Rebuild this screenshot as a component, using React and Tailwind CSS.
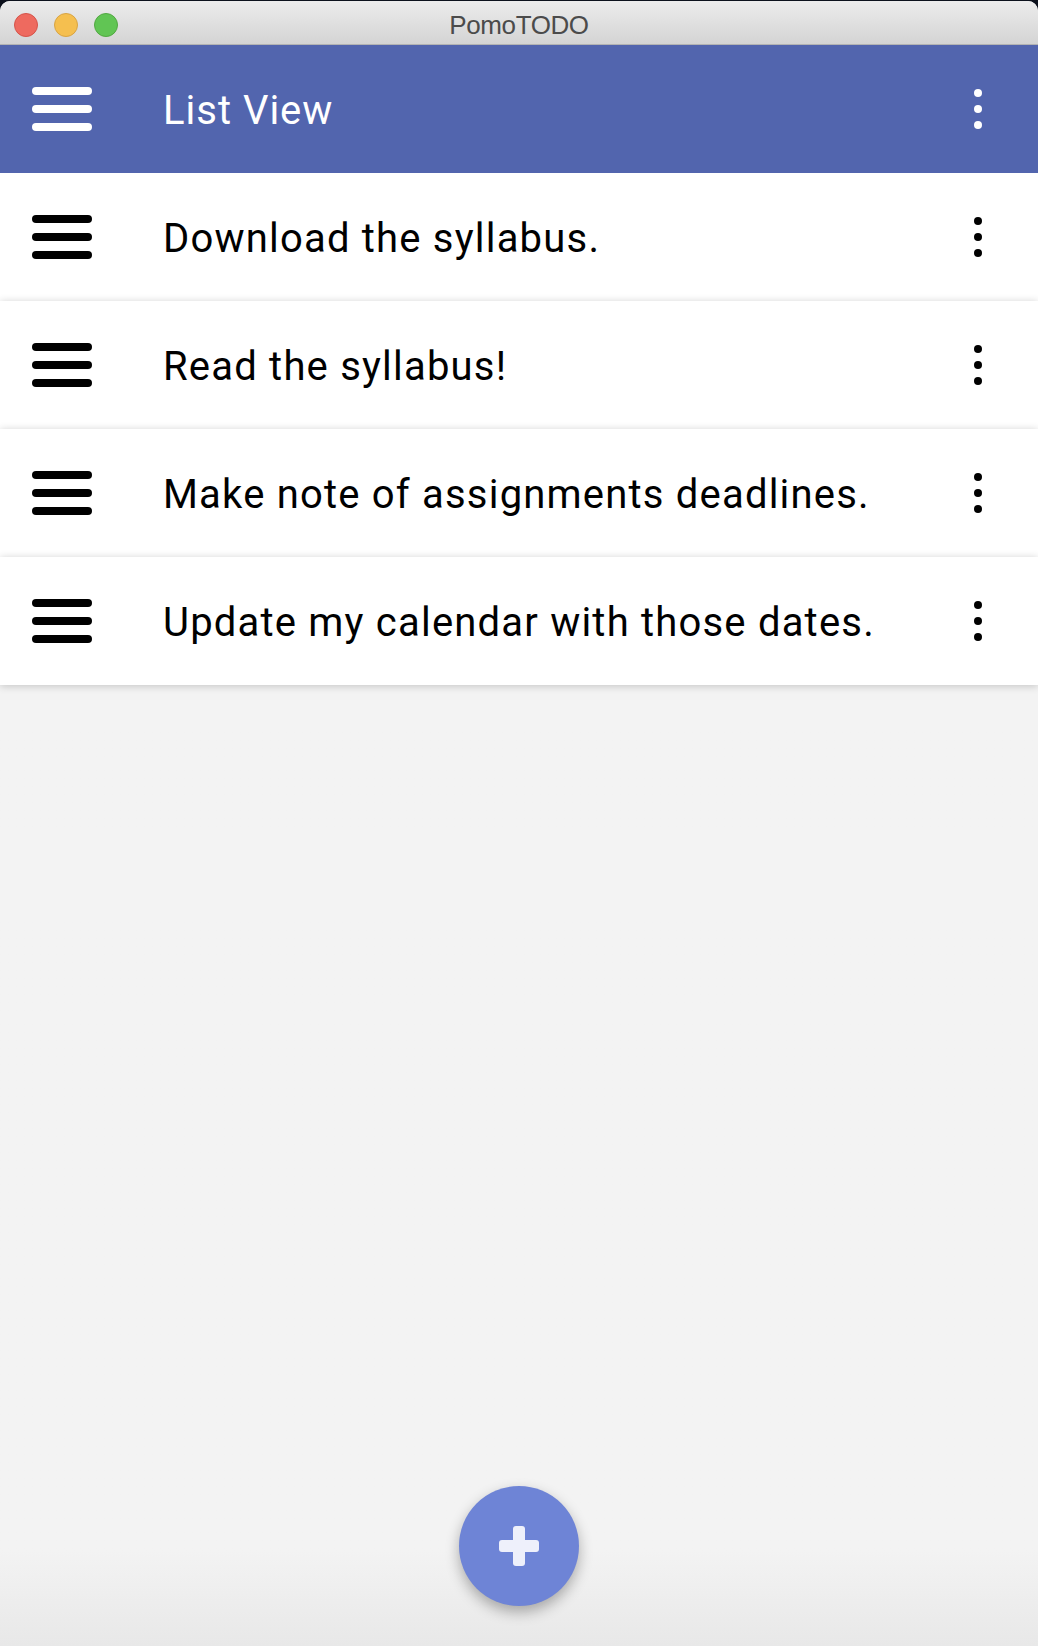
import React from "react";

function Hamburger({ color }) {
  return (
    <svg width="60" height="44" viewBox="0 0 60 44" className="shrink-0">
      <rect x="0" y="0" width="60" height="8" rx="4" fill={color} />
      <rect x="0" y="18" width="60" height="8" rx="4" fill={color} />
      <rect x="0" y="36" width="60" height="8" rx="4" fill={color} />
    </svg>
  );
}

function MoreDots({ color }) {
  return (
    <svg width="8" height="40" viewBox="0 0 8 40" className="shrink-0">
      <circle cx="4" cy="4" r="4" fill={color} />
      <circle cx="4" cy="20" r="4" fill={color} />
      <circle cx="4" cy="36" r="4" fill={color} />
    </svg>
  );
}

export default function App() {
  const todos = [
    "Download the syllabus.",
    "Read the syllabus!",
    "Make note of assignments deadlines.",
    "Update my calendar with those dates.",
  ];

  return (
    <div className="h-screen w-full bg-[#0c111c] pt-px">
      <div className="h-full flex flex-col rounded-t-[10px] overflow-hidden bg-[#f2f2f2] font-['Roboto',sans-serif]">
        {/* Title bar */}
        <div className="h-[44px] shrink-0 relative flex items-center justify-center bg-gradient-to-b from-[#ececec] to-[#d4d4d4] border-b border-[#b3b3b3]">
          <div className="absolute left-[14px] top-[12px] flex gap-4">
            <div className="w-6 h-6 rounded-full bg-[#ee6a5f] border border-[#d5544a]"></div>
            <div className="w-6 h-6 rounded-full bg-[#f5bf4f] border border-[#d8a444]"></div>
            <div className="w-6 h-6 rounded-full bg-[#61c554] border border-[#52a842]"></div>
          </div>
          <span className="pt-[5px] text-[26px] leading-none text-[#4b4b4b] font-['Liberation_Sans',sans-serif] tracking-[-0.4px]">
            PomoTODO
          </span>
        </div>

        {/* App bar */}
        <div className="h-[128px] shrink-0 flex items-center bg-[#5265ae] pl-8 pr-14 relative z-20">
          <Hamburger color="#ffffff" />
          <h1 className="ml-[71px] pt-[3px] flex-1 text-[40px] text-white leading-none tracking-[1px]">
            List View
          </h1>
          <MoreDots color="#ffffff" />
        </div>

        {/* List */}
        <div className="flex flex-col relative z-10">
          {todos.map((todo, index) => (
            <div
              key={index}
              className="h-[128px] flex items-center bg-white pl-8 pr-14 shadow-[0_1px_8px_rgba(0,0,0,0.2)]"
            >
              <Hamburger color="#000000" />
              <p className="ml-[71px] pt-[3px] flex-1 text-[40px] text-black leading-none tracking-[1.2px]">
                {todo}
              </p>
              <MoreDots color="#000000" />
            </div>
          ))}
        </div>

        {/* FAB */}
        <div className="flex-1 flex flex-col justify-end items-center pb-10 bg-gradient-to-b from-[#f3f3f3] from-90% to-[#e8e8e8]">
          <button className="w-[120px] h-[120px] rounded-full bg-[#6e84d6] flex items-center justify-center shadow-[0_6px_14px_rgba(0,0,0,0.3)]">
            <svg width="40" height="40" viewBox="0 0 40 40">
              <rect x="14" y="0" width="12" height="40" rx="3" fill="#eef0fb" />
              <rect x="0" y="14" width="40" height="12" rx="3" fill="#eef0fb" />
            </svg>
          </button>
        </div>
      </div>
    </div>
  );
}
